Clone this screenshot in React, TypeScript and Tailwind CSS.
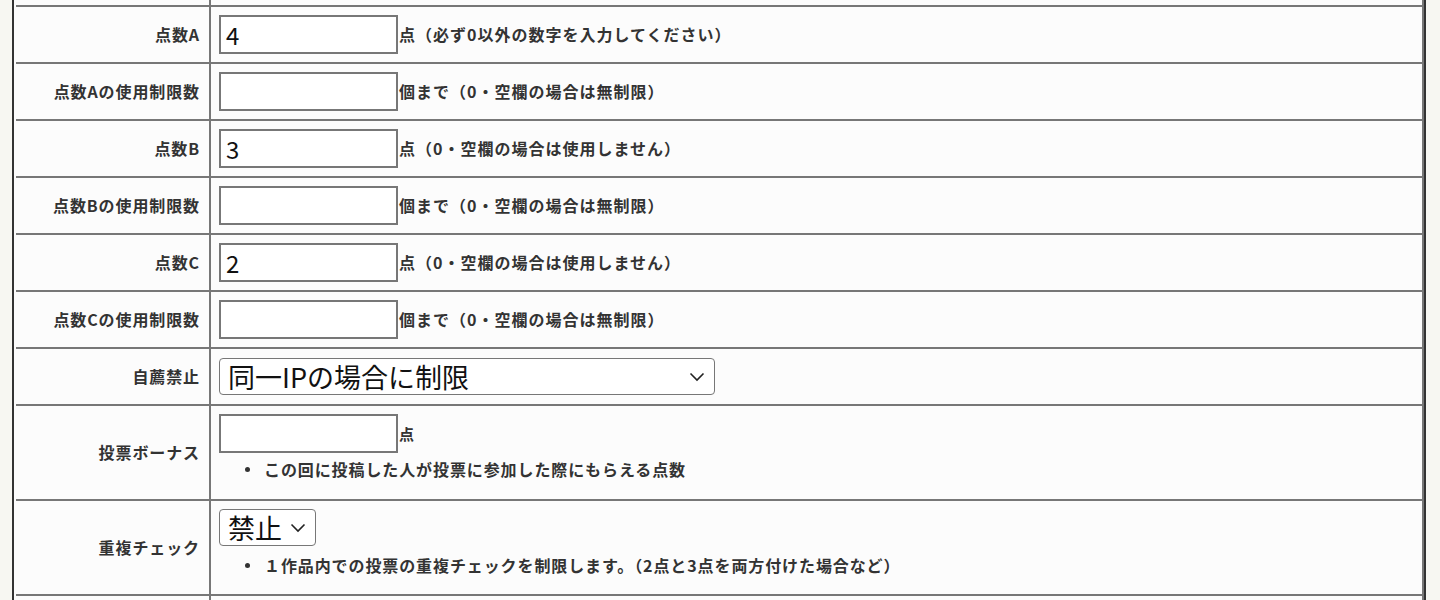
import { ReactNode } from "react";

const font = { fontFamily: '"Noto Sans CJK JP", "Noto Sans", sans-serif' };

function Row({ label, children }: { label: string; children: ReactNode }) {
  return (
    <div className="flex border-b-2 border-[#777]">
      <div className="w-[193px] shrink-0 flex items-center justify-end pr-[9px] text-[16px] leading-none font-bold text-[#333] tracking-[0.9px]">
        <span className="-translate-y-[1px]">{label}</span>
      </div>
      <div className="flex-1 border-l-2 border-[#777] p-2">{children}</div>
    </div>
  );
}

function TextBox({ value }: { value?: string }) {
  return (
    <div className="w-[179px] h-[39px] shrink-0 border-2 border-[#777] bg-white flex items-center pl-[5px] text-[24px] text-[#111] leading-none">
      {value}
    </div>
  );
}

function Select({ value, width }: { value: string; width: string }) {
  return (
    <div
      className={`${width} h-[37px] border-[1.5px] border-[#777] rounded-[4px] bg-white flex items-center justify-between pl-[8px] pr-[9px] text-[27px] text-[#111] leading-none`}
    >
      <span>{value}</span>
      <svg width="16" height="10" viewBox="0 0 16 10" fill="none">
        <polyline points="1.5,1.5 8,8 14.5,1.5" stroke="#222" strokeWidth="1.6" />
      </svg>
    </div>
  );
}

function Note({ children }: { children: ReactNode }) {
  return (
    <span className="text-[16px] leading-none font-bold text-[#333] whitespace-nowrap pl-px tracking-[1px] -translate-y-[1px]">
      {children}
    </span>
  );
}

function Bullet({ children }: { children: ReactNode }) {
  return (
    <div className="flex items-center h-[20px] text-[16px] font-bold text-[#333] tracking-[0.9px]">
      <span className="w-[5px] h-[5px] rounded-full bg-[#333] ml-[26px] mr-[14px]" />
      {children}
    </div>
  );
}

export default function App() {
  return (
    <div className="min-h-screen bg-[#f7f7f2]" style={font}>
      <div className="ml-[12px] w-[1414px] h-[600px] overflow-hidden border-l-2 border-r-2 border-[#333] pl-[2px] bg-[#fcfcfc]">
        <div className="border-r-2 border-[#777]">
          {/* previous row, cut off */}
          <div className="flex h-[7px] border-b-2 border-[#777]">
            <div className="w-[193px]" />
            <div className="flex-1 border-l-2 border-[#777]" />
          </div>

          <Row label="点数A">
            <div className="flex items-center">
              <TextBox value="4" />
              <Note>点（必ず0以外の数字を入力してください）</Note>
            </div>
          </Row>
          <Row label="点数Aの使用制限数">
            <div className="flex items-center">
              <TextBox />
              <Note>個まで（0・空欄の場合は無制限）</Note>
            </div>
          </Row>
          <Row label="点数B">
            <div className="flex items-center">
              <TextBox value="3" />
              <Note>点（0・空欄の場合は使用しません）</Note>
            </div>
          </Row>
          <Row label="点数Bの使用制限数">
            <div className="flex items-center">
              <TextBox />
              <Note>個まで（0・空欄の場合は無制限）</Note>
            </div>
          </Row>
          <Row label="点数C">
            <div className="flex items-center">
              <TextBox value="2" />
              <Note>点（0・空欄の場合は使用しません）</Note>
            </div>
          </Row>
          <Row label="点数Cの使用制限数">
            <div className="flex items-center">
              <TextBox />
              <Note>個まで（0・空欄の場合は無制限）</Note>
            </div>
          </Row>
          <Row label="自薦禁止">
            <div className="py-px">
              <Select value="同一IPの場合に制限" width="w-[496px]" />
            </div>
          </Row>
          <Row label="投票ボーナス">
            <div className="flex items-end">
              <TextBox />
              <span className="text-[15px] font-bold text-[#333] pb-[8px] pl-px">点</span>
            </div>
            <div className="mt-[6px] mb-[12px]">
              <Bullet>この回に投稿した人が投票に参加した際にもらえる点数</Bullet>
            </div>
          </Row>
          <Row label="重複チェック">
            <Select value="禁止" width="w-[97px]" />
            <div className="mt-[9px] mb-[11px]">
              <Bullet>１作品内での投票の重複チェックを制限します。（2点と3点を両方付けた場合など）</Bullet>
            </div>
          </Row>
          <div className="flex h-[40px]">
            <div className="w-[193px]" />
            <div className="flex-1 border-l-2 border-[#777]" />
          </div>
        </div>
      </div>
    </div>
  );
}
